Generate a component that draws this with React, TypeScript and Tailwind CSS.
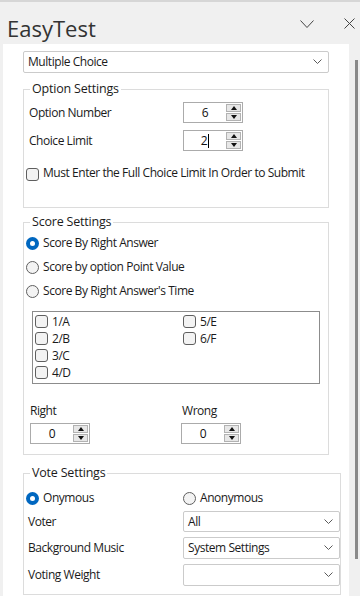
import React from 'react';

const Chevron: React.FC<{ className?: string }> = ({ className }) => (
  <svg className={className} width="9" height="6" viewBox="0 0 9 6" fill="none">
    <polyline points="0.5,0.5 4.5,4.5 8.5,0.5" stroke="#5a5a5a" strokeWidth="1" />
  </svg>
);

const Dropdown: React.FC<{ value: string; className?: string }> = ({ value, className }) => (
  <div
    className={`flex items-center justify-between rounded-[2px] border border-[#cbcbcb] bg-white pl-[4px] pr-[6px] text-[12px] text-[#1b1b1b] ${className ?? ''}`}
  >
    <span>{value}</span>
    <Chevron />
  </div>
);

const Spin: React.FC<{ value: string; caret?: boolean }> = ({ value, caret }) => (
  <div className="flex h-[21px] w-[60px] border border-[#ababab] bg-white">
    <div className="flex flex-1 items-center justify-center text-[12px] text-[#111]">
      <span>{value}</span>
      {caret && <span className="ml-[1px] h-[14px] w-px bg-black" />}
    </div>
    <div className="flex w-[16px] flex-col gap-px py-px pr-px">
      <div className="flex flex-1 items-center justify-center border border-[#b2b2b2] bg-[#e7e7e7]">
        <svg width="6" height="4" viewBox="0 0 6 4">
          <polygon points="0,4 3,0 6,4" fill="#111" />
        </svg>
      </div>
      <div className="flex flex-1 items-center justify-center border border-[#b2b2b2] bg-[#e7e7e7]">
        <svg width="6" height="4" viewBox="0 0 6 4">
          <polygon points="0,0 6,0 3,4" fill="#111" />
        </svg>
      </div>
    </div>
  </div>
);

const Check: React.FC = () => (
  <span className="box-border inline-block h-[13px] w-[13px] shrink-0 rounded-[3px] border border-[#5f5f5f] bg-[#f3f3f3]" />
);

const Radio: React.FC<{ on?: boolean }> = ({ on }) =>
  on ? (
    <span className="flex h-[13px] w-[13px] shrink-0 items-center justify-center rounded-full bg-[#0067c0]">
      <span className="h-[5px] w-[5px] rounded-full bg-white" />
    </span>
  ) : (
    <span className="box-border inline-block h-[13px] w-[13px] shrink-0 rounded-full border border-[#5f5f5f] bg-[#f3f3f3]" />
  );

const Group: React.FC<{ title: string; className?: string; children: React.ReactNode }> = ({
  title,
  className,
  children,
}) => (
  <fieldset className={`mx-[20px] border border-[#dcdcdc] ${className ?? ''}`}>
    <legend className="ml-[6px] px-[2px] text-[12.5px] leading-[16px] tracking-[-0.2px] text-[#1b1b1b]">{title}</legend>
    {children}
  </fieldset>
);

export default function App() {
  const answers = [
    ['1/A', '5/E'],
    ['2/B', '6/F'],
    ['3/C', ''],
    ['4/D', ''],
  ];

  return (
    <div className="flex h-[596px] w-[360px] flex-col overflow-hidden border-t-2 border-[#d6d6d6] bg-[#f0f0f0] font-['Open_Sans',sans-serif] tracking-[-0.45px] text-[#1b1b1b]">
      {/* Header */}
      <div className="relative h-[42px] shrink-0">
        <div className="pl-[7px] pt-[13px] text-[22px] leading-[26px] tracking-normal text-[#333]">EasyTest</div>
        <svg className="absolute left-[300px] top-[18px]" width="14" height="9" viewBox="0 0 14 9" fill="none">
          <polyline points="0.5,0.5 7,7.5 13.5,0.5" stroke="#444" strokeWidth="1" />
        </svg>
        <svg className="absolute left-[344px] top-[16px]" width="11" height="11" viewBox="0 0 11 11" fill="none">
          <line x1="0.5" y1="0.5" x2="10.5" y2="10.5" stroke="#444" strokeWidth="1" />
          <line x1="10.5" y1="0.5" x2="0.5" y2="10.5" stroke="#444" strokeWidth="1" />
        </svg>
      </div>

      <div className="flex flex-1">
        {/* Panel */}
        <div className="ml-[3px] w-[346px] bg-white pt-[7px]">
          <Dropdown value="Multiple Choice" className="mx-[20px] h-[22px]" />

          <Group title="Option Settings" className="mt-[8px]">
            <div className="pl-[5px] pt-[5px] pb-[24px]">
              <div className="flex items-center">
                <span className="w-[154px] text-[12px]">Option Number</span>
                <Spin value="6" />
              </div>
              <div className="mt-[7px] flex items-center">
                <span className="w-[154px] text-[12px]">Choice Limit</span>
                <Spin value="2" caret />
              </div>
              <div className="-ml-[3px] mt-[15px] flex h-[17px] items-center gap-[4px] text-[12px]">
                <Check />
                <span className="-mt-[3px]">Must Enter the Full Choice Limit In Order to Submit</span>
              </div>
            </div>
          </Group>

          <Group title="Score Settings" className="mt-[6px]">
            <div className="pb-[10px] pt-[5px]">
              <div className="flex flex-col gap-[8px] pl-[2px] text-[12px]">
                <div className="flex h-[16px] items-center gap-[4px]">
                  <Radio on />
                  <span>Score By Right Answer</span>
                </div>
                <div className="flex h-[16px] items-center gap-[4px]">
                  <Radio />
                  <span>Score by option Point Value</span>
                </div>
                <div className="flex h-[16px] items-center gap-[4px]">
                  <Radio />
                  <span>Score By Right Answer's Time</span>
                </div>
              </div>

              <div className="mx-[8px] mt-[12px] h-[73px] border border-[#8c8c8c] pl-[2px] pt-[1px]">
                {answers.map((row, i) => (
                  <div key={i} className="flex h-[17px] items-center text-[12px]">
                    <div className="flex w-[148px] items-center gap-[4px]">
                      <Check />
                      <span>{row[0]}</span>
                    </div>
                    {row[1] && (
                      <div className="flex items-center gap-[4px]">
                        <Check />
                        <span>{row[1]}</span>
                      </div>
                    )}
                  </div>
                ))}
              </div>

              <div className="mt-[19px] flex pl-[6px] text-[12px]">
                <div className="w-[151px]">
                  <div className="h-[16px] leading-[16px]">Right</div>
                  <div className="mt-[4px]">
                    <Spin value="0" />
                  </div>
                </div>
                <div>
                  <div className="h-[16px] pl-px leading-[16px]">Wrong</div>
                  <div className="mt-[4px]">
                    <Spin value="0" />
                  </div>
                </div>
              </div>
            </div>
          </Group>

          <Group title="Vote Settings" className="mt-[10px]">
            <div className="pb-[8px] pt-[9px] text-[12px]">
              <div className="flex h-[16px] items-center pl-[2px]">
                <div className="flex w-[157px] items-center gap-[4px]">
                  <Radio on />
                  <span>Onymous</span>
                </div>
                <div className="flex items-center gap-[4px]">
                  <Radio />
                  <span>Anonymous</span>
                </div>
              </div>
              <div className="mt-[5px] flex flex-col gap-[5px] pl-[4px]">
                <div className="flex items-center">
                  <span className="w-[155px]">Voter</span>
                  <Dropdown value="All" className="h-[21px] w-[157px]" />
                </div>
                <div className="flex items-center">
                  <span className="w-[155px]">Background Music</span>
                  <Dropdown value="System Settings" className="h-[22px] w-[157px]" />
                </div>
                <div className="flex items-center">
                  <span className="w-[155px]">Voting Weight</span>
                  <Dropdown value="" className="h-[22px] w-[157px]" />
                </div>
              </div>
            </div>
          </Group>
        </div>

        {/* Scrollbar */}
        <div className="flex-1 pl-[6px] pt-[16px]">
          <div className="h-[499px] w-[3px] bg-[#8a8a8a]" />
        </div>
      </div>
    </div>
  );
}
